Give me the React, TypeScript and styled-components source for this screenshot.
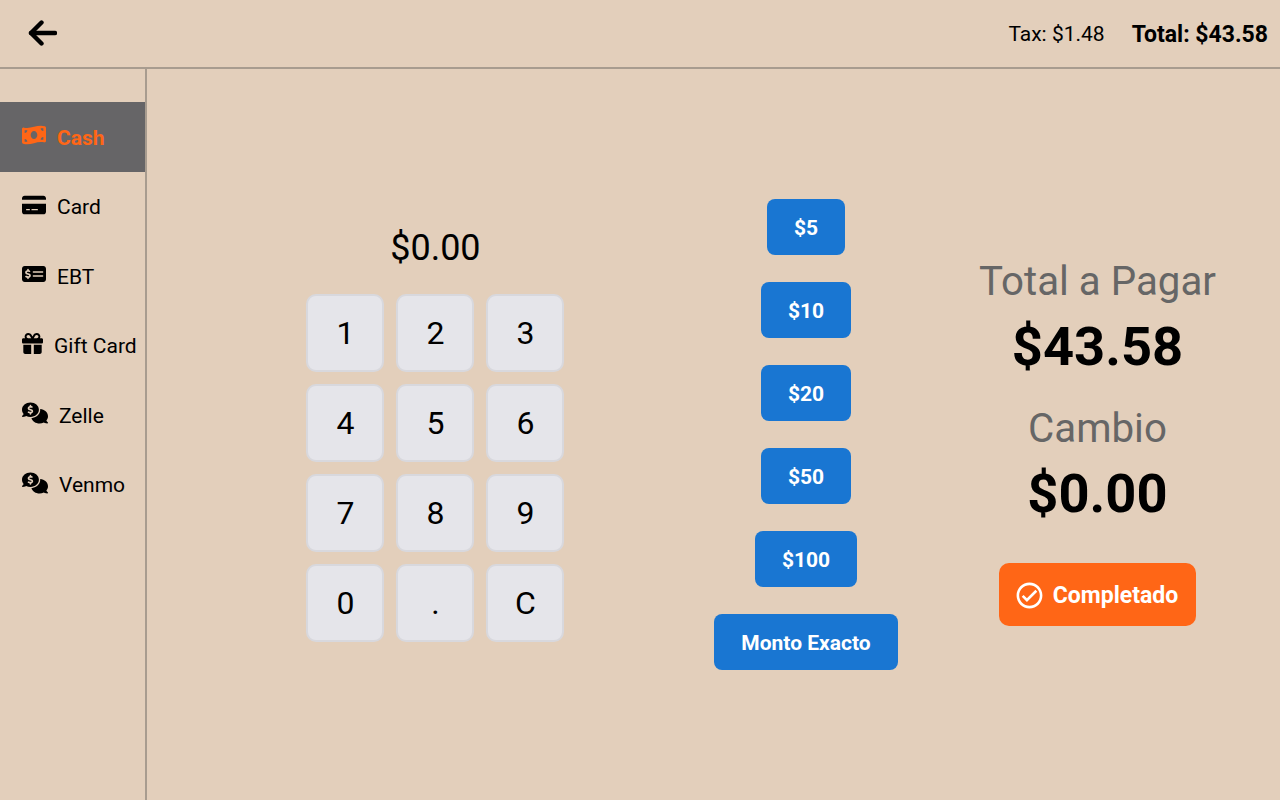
import React from 'react';
import styled, { createGlobalStyle } from 'styled-components';
import {
  FaMoneyBillWave,
  FaCreditCard,
  FaMoneyCheckDollar,
  FaGift,
  FaCommentsDollar,
} from 'react-icons/fa6';
import { MdOutlineCheckCircle } from 'react-icons/md';

const GlobalStyle = createGlobalStyle`
  html, body {
    margin: 0;
    padding: 0;
    background: #e3cfbb;
    font-family: 'Roboto', sans-serif;
  }
`;

const Screen = styled.div`
  width: 1280px;
  height: 800px;
  display: flex;
  flex-direction: column;
  overflow: hidden;
  background: #e3cfbb;
  color: #000;
`;

const Header = styled.header`
  box-sizing: border-box;
  height: 69px;
  flex: none;
  display: flex;
  align-items: center;
  justify-content: space-between;
  padding: 0 12px 0 27px;
  border-bottom: 2px solid #a89c8f;
`;

const BackButton = styled.button`
  display: flex;
  padding: 0 0 2px;
  border: none;
  background: none;
  color: #000;
  cursor: pointer;
`;

const Totals = styled.div`
  display: flex;
  align-items: center;
  gap: 27px;
`;

const Tax = styled.span`
  font-size: 21px;
`;

const GrandTotal = styled.span`
  font-size: 23px;
  font-weight: 700;
  padding-top: 2px;
`;

const Body = styled.div`
  flex: 1;
  display: flex;
  min-height: 0;
`;

const Sidebar = styled.nav`
  width: 145px;
  flex: none;
  padding-top: 33px;
  border-right: 2px solid #a89c8f;
`;

const MethodRow = styled.div<{ $active?: boolean; $iconSize: number }>`
  box-sizing: border-box;
  height: 69.5px;
  display: flex;
  align-items: center;
  gap: 11px;
  padding: 2px 0 0 22px;
  font-size: 21px;
  font-weight: ${({ $active }) => ($active ? 700 : 400)};
  color: ${({ $active }) => ($active ? '#ff6616' : '#000')};
  background: ${({ $active }) => ($active ? '#666567' : 'transparent')};
  white-space: nowrap;

  svg {
    flex: none;
    font-size: ${({ $iconSize }) => $iconSize}px;
    margin-top: -5px;
  }
`;

const Content = styled.main`
  flex: 1;
  display: flex;
  align-items: center;
  padding: 0 0 0 159.4px;
  height: 100%;
`;

const PadColumn = styled.section`
  width: 258px;
  flex: none;
  display: flex;
  flex-direction: column;
  align-items: center;
  gap: 25.8px;
`;

const Entered = styled.div`
  font-size: 36px;
  line-height: 42px;
`;

const Keypad = styled.div`
  display: grid;
  grid-template-columns: repeat(3, 78px);
  grid-auto-rows: 78px;
  gap: 12px;
`;

const Key = styled.button`
  box-sizing: border-box;
  border: 2px solid #d8d8dd;
  border-radius: 10px;
  background: #e5e5ea;
  color: #000;
  font-family: inherit;
  font-size: 32px;
  padding: 0;
  cursor: pointer;
`;

const QuickColumn = styled.section`
  width: 184px;
  flex: none;
  margin-left: 149.6px;
  display: flex;
  flex-direction: column;
  align-items: center;
  gap: 27px;
`;

const QuickButton = styled.button`
  height: 56px;
  padding: 2px 27px 0;
  border: none;
  border-radius: 8px;
  background: #1976d2;
  color: #fff;
  font-family: inherit;
  font-size: 21px;
  font-weight: 700;
  white-space: nowrap;
  cursor: pointer;
`;

const SummaryColumn = styled.section`
  width: 237px;
  flex: none;
  margin-left: 81px;
  margin-top: 13.5px;
  display: flex;
  flex-direction: column;
  align-items: center;
`;

const SummaryLabel = styled.div`
  font-size: 40.25px;
  line-height: 49px;
  margin-bottom: 9px;
  color: #666;
  white-space: nowrap;
`;

const SummaryValue = styled.div`
  font-size: 54.25px;
  line-height: 63px;
  font-weight: 700;
  margin-bottom: 26px;
`;

const CompleteButton = styled.button`
  display: flex;
  align-items: center;
  gap: 8px;
  height: 63px;
  margin-top: 11.5px;
  padding: 2px 18px 0 15px;
  border: none;
  border-radius: 10px;
  background: #ff6616;
  color: #fff;
  font-family: inherit;
  font-size: 23px;
  font-weight: 700;
  cursor: pointer;

  svg {
    font-size: 31px;
  }
`;

const methods = [
  { label: 'Cash', icon: <FaMoneyBillWave />, iconSize: 24, active: true },
  { label: 'Card', icon: <FaCreditCard />, iconSize: 24 },
  { label: 'EBT', icon: <FaMoneyCheckDollar />, iconSize: 24 },
  { label: 'Gift Card', icon: <FaGift />, iconSize: 21 },
  { label: 'Zelle', icon: <FaCommentsDollar />, iconSize: 26 },
  { label: 'Venmo', icon: <FaCommentsDollar />, iconSize: 26 },
];

const keys = ['1', '2', '3', '4', '5', '6', '7', '8', '9', '0', '.', 'C'];
const quickAmounts = ['$5', '$10', '$20', '$50', '$100', 'Monto Exacto'];

export default function App() {
  return (
    <Screen>
      <GlobalStyle />
      <Header>
        <BackButton aria-label="Back">
          <svg width="30" height="26" viewBox="0 0 30 26" fill="none" stroke="#000" strokeWidth="4.4" strokeLinecap="round" strokeLinejoin="round">
            <path d="M4 13H28" />
            <path d="M14.5 2.5L4 13L14.5 23.5" />
          </svg>
        </BackButton>
        <Totals>
          <Tax>Tax: $1.48</Tax>
          <GrandTotal>Total: $43.58</GrandTotal>
        </Totals>
      </Header>
      <Body>
        <Sidebar>
          {methods.map(m => (
            <MethodRow key={m.label} $active={m.active} $iconSize={m.iconSize}>
              {m.icon}
              <span>{m.label}</span>
            </MethodRow>
          ))}
        </Sidebar>
        <Content>
          <PadColumn>
            <Entered>$0.00</Entered>
            <Keypad>
              {keys.map(k => (
                <Key key={k}>{k}</Key>
              ))}
            </Keypad>
          </PadColumn>
          <QuickColumn>
            {quickAmounts.map(a => (
              <QuickButton key={a}>{a}</QuickButton>
            ))}
          </QuickColumn>
          <SummaryColumn>
            <SummaryLabel>Total a Pagar</SummaryLabel>
            <SummaryValue>$43.58</SummaryValue>
            <SummaryLabel>Cambio</SummaryLabel>
            <SummaryValue>$0.00</SummaryValue>
            <CompleteButton>
              <MdOutlineCheckCircle />
              Completado
            </CompleteButton>
          </SummaryColumn>
        </Content>
      </Body>
    </Screen>
  );
}
